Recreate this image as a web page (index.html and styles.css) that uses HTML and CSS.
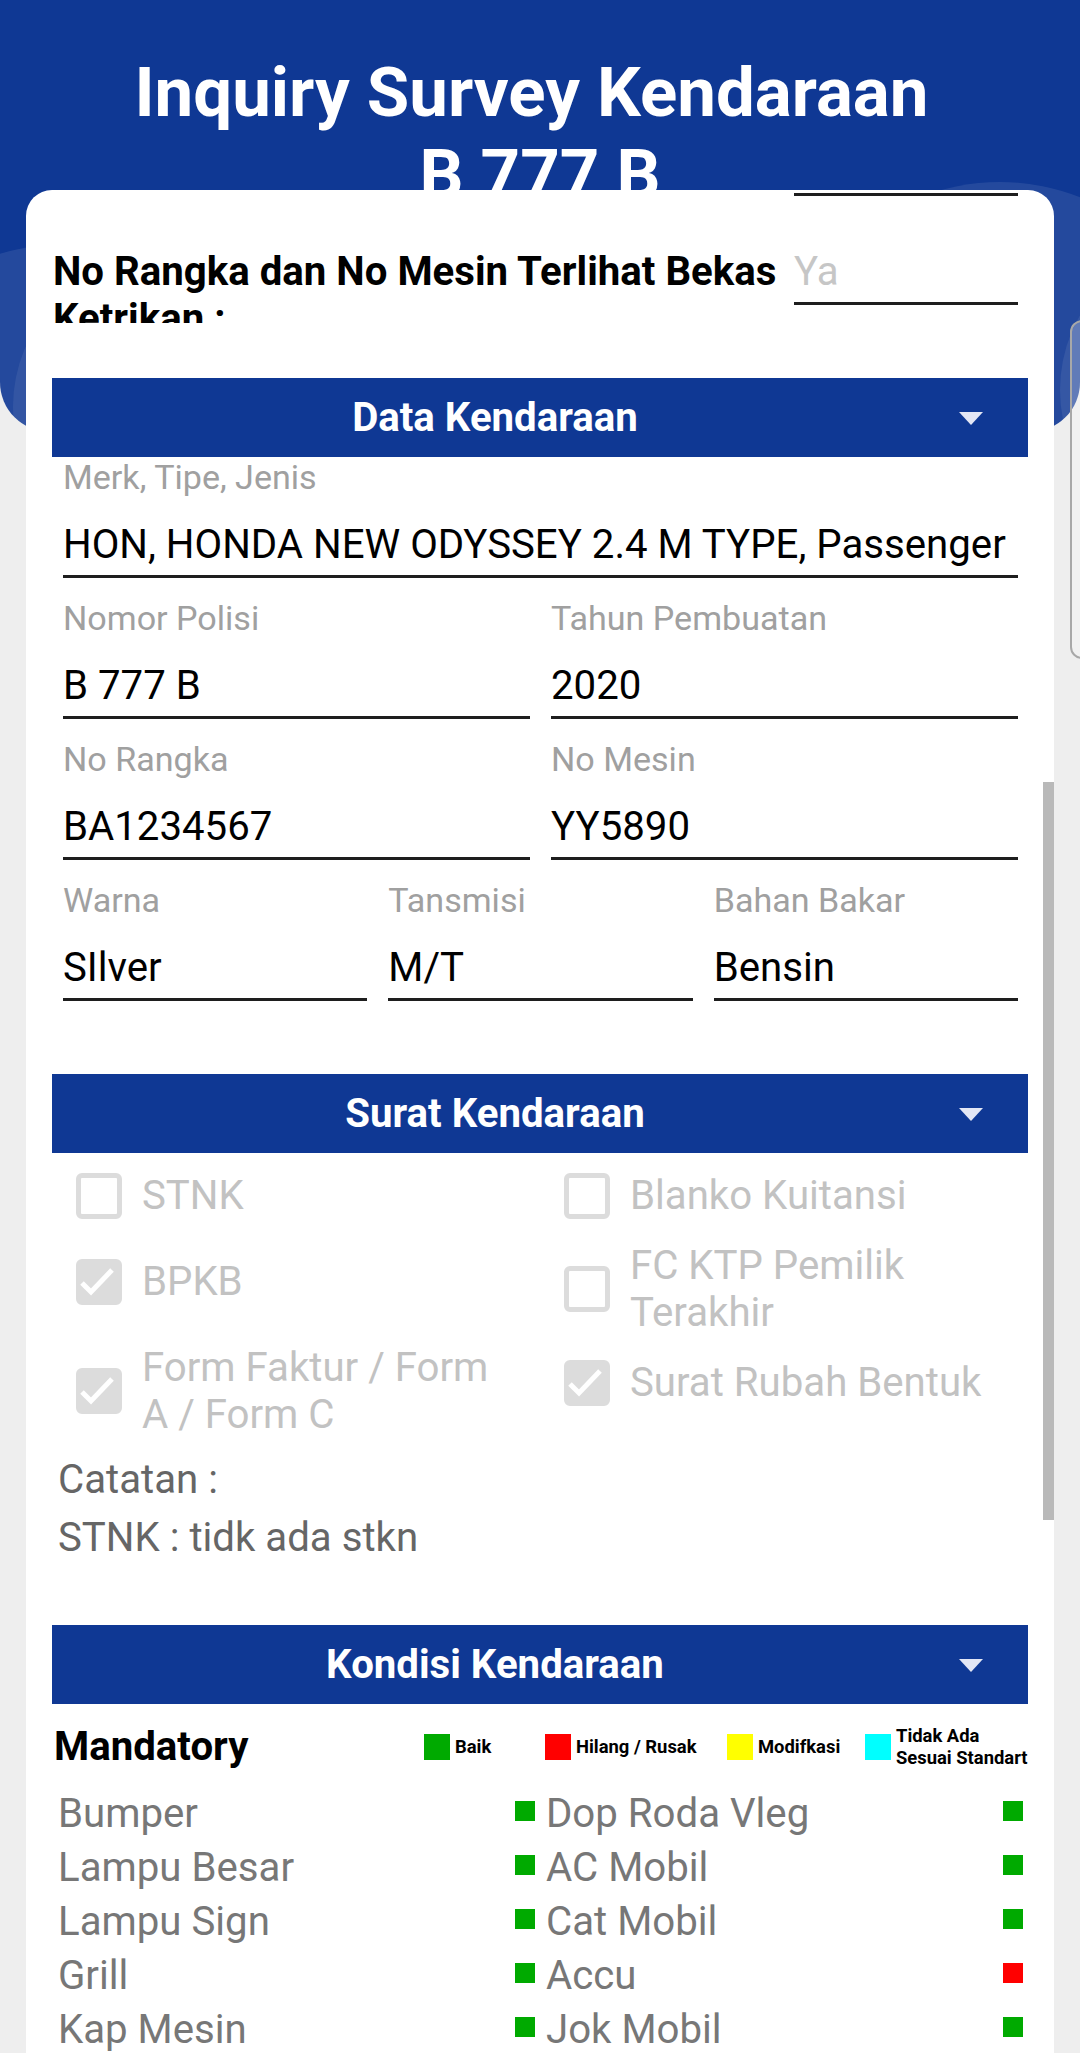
FILE: index.html
```html
<!DOCTYPE html>
<html lang="id">
<head>
<meta charset="utf-8">
<title>Inquiry Survey Kendaraan</title>
<link rel="stylesheet" href="styles.css">
</head>
<body>
<div class="screen">
  <header class="hero">
    <div class="deco deco-r"></div>
    <div class="deco deco-r2"></div>
    <div class="deco deco-l"></div>
    <div class="deco deco-l2"></div>
    <h1 class="title">Inquiry Survey Kendaraan&nbsp;<br>B 777 B</h1>
  </header>
  <div class="peek"></div>

  <main class="card">
    <div class="prev-line"></div>
    <div class="q-row">
      <div class="q-label">No Rangka dan No Mesin Terlihat Bekas Ketrikan :</div>
      <div class="q-input">Ya</div>
    </div>

    <div class="section-bar bar-first">
      <span class="bar-title">Data Kendaraan</span>
      <svg class="arrow" viewBox="0 0 24 13"><polygon points="0,0 24,0 12,13" fill="#e3e7f5"/></svg>
    </div>
    <div class="fields">
      <div class="frow frow-1">
        <div class="field">
          <div class="flabel">Merk, Tipe, Jenis</div>
          <div class="fvalue">HON, HONDA NEW ODYSSEY 2.4 M TYPE, Passenger</div>
        </div>
      </div>
      <div class="frow">
        <div class="field">
          <div class="flabel">Nomor Polisi</div>
          <div class="fvalue">B 777 B</div>
        </div>
        <div class="field">
          <div class="flabel">Tahun Pembuatan</div>
          <div class="fvalue">2020</div>
        </div>
      </div>
      <div class="frow">
        <div class="field">
          <div class="flabel">No Rangka</div>
          <div class="fvalue">BA1234567</div>
        </div>
        <div class="field">
          <div class="flabel">No Mesin</div>
          <div class="fvalue">YY5890</div>
        </div>
      </div>
      <div class="frow frow-3">
        <div class="field">
          <div class="flabel">Warna</div>
          <div class="fvalue">SIlver</div>
        </div>
        <div class="field">
          <div class="flabel">Tansmisi</div>
          <div class="fvalue">M/T</div>
        </div>
        <div class="field">
          <div class="flabel">Bahan Bakar</div>
          <div class="fvalue">Bensin</div>
        </div>
      </div>
    </div>

    <div class="section-bar bar-surat">
      <span class="bar-title">Surat Kendaraan</span>
      <svg class="arrow" viewBox="0 0 24 13"><polygon points="0,0 24,0 12,13" fill="#e3e7f5"/></svg>
    </div>
    <div class="checks">
      <div class="ccol ccol-l">
        <div class="citem"><span class="cbox"></span><span class="clabel">STNK</span></div>
        <div class="citem"><span class="cbox on"><svg viewBox="0 0 36 36"><polyline points="1,19 10,28 31,6" fill="none" stroke="#fff" stroke-width="5"/></svg></span><span class="clabel">BPKB</span></div>
        <div class="citem"><span class="cbox on"><svg viewBox="0 0 36 36"><polyline points="1,19 10,28 31,6" fill="none" stroke="#fff" stroke-width="5"/></svg></span><span class="clabel">Form Faktur / Form A / Form C</span></div>
      </div>
      <div class="ccol ccol-r">
        <div class="citem"><span class="cbox"></span><span class="clabel">Blanko Kuitansi</span></div>
        <div class="citem"><span class="cbox"></span><span class="clabel">FC KTP Pemilik Terakhir</span></div>
        <div class="citem"><span class="cbox on"><svg viewBox="0 0 36 36"><polyline points="1,19 10,28 31,6" fill="none" stroke="#fff" stroke-width="5"/></svg></span><span class="clabel">Surat Rubah Bentuk</span></div>
      </div>
    </div>
    <div class="notes">
      <p>Catatan :</p>
      <p>STNK : tidk ada stkn</p>
    </div>

    <div class="section-bar bar-kondisi">
      <span class="bar-title">Kondisi Kendaraan</span>
      <svg class="arrow" viewBox="0 0 24 13"><polygon points="0,0 24,0 12,13" fill="#e3e7f5"/></svg>
    </div>
    <div class="mand-row">
      <div class="mand">Mandatory</div>
      <div class="legend">
        <div class="lg"><span class="sw green"></span><span>Baik</span></div>
        <div class="lg"><span class="sw red"></span><span>Hilang / Rusak</span></div>
        <div class="lg"><span class="sw yellow"></span><span>Modifkasi</span></div>
        <div class="lg"><span class="sw cyan"></span><span>Tidak Ada<br>Sesuai Standart</span></div>
      </div>
    </div>
    <div class="list">
      <div class="li"><span>Bumper</span><span class="dot green"></span></div>
      <div class="li"><span>Dop Roda Vleg</span><span class="dot green"></span></div>
      <div class="li"><span>Lampu Besar</span><span class="dot green"></span></div>
      <div class="li"><span>AC Mobil</span><span class="dot green"></span></div>
      <div class="li"><span>Lampu Sign</span><span class="dot green"></span></div>
      <div class="li"><span>Cat Mobil</span><span class="dot green"></span></div>
      <div class="li"><span>Grill</span><span class="dot green"></span></div>
      <div class="li"><span>Accu</span><span class="dot red"></span></div>
      <div class="li"><span>Kap Mesin</span><span class="dot green"></span></div>
      <div class="li"><span>Jok Mobil</span><span class="dot green"></span></div>
    </div>

    <div class="scrollbar"></div>
  </main>
</div>
</body>
</html>
```

FILE: styles.css
```css
* { box-sizing: border-box; }

body {
  margin: 0;
  font-family: Roboto, "Noto Sans", "Liberation Sans", sans-serif;
  background: #eeeeee;
}

.screen {
  position: relative;
  width: 1080px;
  height: 2053px;
  overflow: hidden;
  background: #eeeeee;
}

/* ---------- header ---------- */
.hero {
  position: relative;
  height: 432px;
  padding-top: 52px;
  background: #0f3894;
  border-radius: 0 0 50px 50px;
  overflow: hidden;
}

.deco {
  position: absolute;
  border-radius: 50%;
  background: rgba(255, 255, 255, 0.09);
}
.deco-r  { left: 782px;  top: 182px; width: 436px; height: 436px; }
.deco-r2 { left: 1060px; top: 240px; width: 300px; height: 300px; background: rgba(255,255,255,0.08); }
.deco-l  { left: -150px; top: 245px; width: 420px; height: 420px; }
.deco-l2 { left: 13px;   top: 257px; width: 300px; height: 300px; background: rgba(255,255,255,0.07); }

.title {
  position: relative;
  margin: 0;
  color: #ffffff;
  font-size: 69px;
  font-weight: 700;
  line-height: 82px;
  text-align: center;
}

.peek {
  position: absolute;
  left: 1070px;
  top: 320px;
  width: 60px;
  height: 339px;
  border: 2px solid #a8a8a8;
  border-radius: 12px;
  background: rgba(255, 255, 255, 0.22);
}

/* ---------- card ---------- */
.card {
  position: relative;
  z-index: 1;
  margin: -242px 26px 0;
  height: 1863px;
  padding: 0 26px;
  background: #ffffff;
  border-radius: 26px 26px 0 0;
  overflow: hidden;
}

.prev-line {
  width: 224px;
  height: 3px;
  margin: 3px 10px 0 auto;
  background: #1e1e1e;
}

.q-row {
  display: flex;
  align-items: flex-start;
  margin-top: 52px;
}
.q-label {
  flex: 1;
  margin-left: 1px;
  height: 75px;
  overflow: hidden;
  font-size: 40.2px;
  font-weight: 700;
  line-height: 47px;
  color: #000000;
}
.q-input {
  width: 224px;
  margin-right: 10px;
  padding-bottom: 7px;
  border-bottom: 3px solid #1e1e1e;
  font-size: 40.2px;
  line-height: 47px;
  color: #c6c6c6;
}

/* ---------- section bars ---------- */
.section-bar {
  display: flex;
  align-items: center;
  height: 79px;
  background: #0f3894;
  color: #ffffff;
  font-size: 40.2px;
  font-weight: 700;
}
.bar-title {
  flex: 1;
  text-align: center;
}
.arrow {
  flex: none;
  width: 24px;
  height: 13px;
  margin: 1px 45px 0 21px;
}
.bar-first   { margin-top: 55px; }
.bar-surat   { margin-top: 73px; }
.bar-kondisi { margin-top: 64px; }

/* ---------- fields ---------- */
.fields {
  display: flex;
  flex-direction: column;
  gap: 20px;
  padding: 0 10px 0 11px;
}
.frow {
  display: grid;
  grid-template-columns: 1fr 1fr;
  column-gap: 21px;
}
.frow-1 { grid-template-columns: 1fr; }
.frow-3 { grid-template-columns: 1fr 1fr 1fr; }

.flabel {
  font-size: 34.1px;
  line-height: 40px;
  color: #a0a0a0;
  white-space: nowrap;
}
.fvalue {
  margin-top: 24px;
  padding-bottom: 7px;
  border-bottom: 3px solid #1e1e1e;
  font-size: 40.2px;
  line-height: 47px;
  color: #000000;
  white-space: nowrap;
}

/* ---------- checkboxes ---------- */
.checks {
  display: grid;
  grid-template-columns: 1fr 1fr;
  margin-top: 19px;
}
.ccol {
  display: flex;
  flex-direction: column;
  padding-left: 24px;
}
.ccol-l { gap: 39px; }
.ccol-r { gap: 23px; }

.citem {
  display: flex;
  align-items: center;
  gap: 20px;
}
.cbox {
  flex: none;
  display: block;
  width: 46px;
  height: 46px;
  border: 5px solid #dcdcdc;
  border-radius: 6px;
}
.cbox.on { background: #dcdcdc; }
.cbox svg {
  display: block;
  width: 36px;
  height: 36px;
  overflow: visible;
}
.clabel {
  max-width: 365px;
  font-size: 40.2px;
  line-height: 47px;
  color: #c2c2c2;
}

.notes {
  display: flex;
  flex-direction: column;
  gap: 11px;
  margin-top: 18px;
  padding-left: 6px;
  font-size: 40.2px;
  line-height: 47px;
  color: #666666;
}
.notes p { margin: 0; }

/* ---------- kondisi ---------- */
.mand-row {
  display: flex;
  align-items: center;
  margin-top: 19px;
  padding-left: 2px;
}
.mand {
  font-size: 40.2px;
  font-weight: 700;
  line-height: 47px;
  color: #000000;
}
.legend {
  display: grid;
  grid-template-columns: 121px 182px 138px 1fr;
  align-items: center;
  width: 604px;
  margin-left: auto;
}
.lg {
  display: flex;
  align-items: center;
  gap: 5px;
  font-size: 18.4px;
  font-weight: 700;
  line-height: 22px;
  color: #000000;
  white-space: nowrap;
}
.sw {
  flex: none;
  width: 26px;
  height: 26px;
}

.green  { background: #00aa00; }
.red    { background: #ff0000; }
.yellow { background: #ffff00; }
.cyan   { background: #00ffff; }

.list {
  display: grid;
  grid-template-columns: 1fr 1fr;
  column-gap: 11px;
  row-gap: 7px;
  margin-top: 20px;
  padding: 0 5px 0 6px;
  font-size: 40.2px;
  line-height: 47px;
  color: #777777;
}
.li {
  display: flex;
  justify-content: space-between;
  align-items: center;
}
.dot {
  flex: none;
  width: 20px;
  height: 20px;
  margin-bottom: 5px;
}

.scrollbar {
  position: absolute;
  right: 0;
  top: 592px;
  width: 11px;
  height: 738px;
  background: #b9b9b9;
}
```
